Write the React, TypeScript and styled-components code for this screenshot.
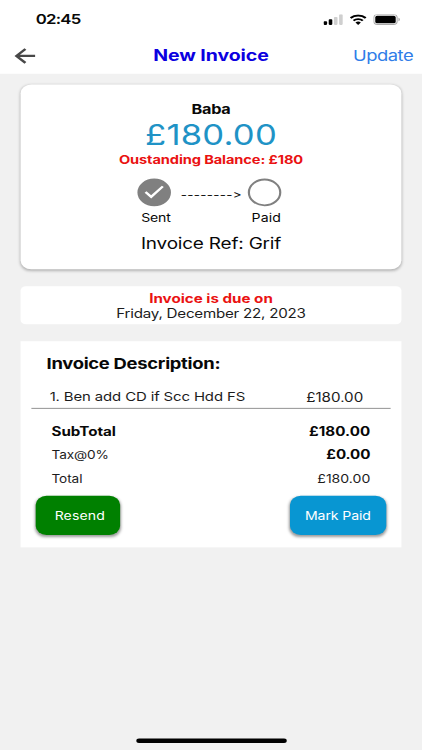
import React from 'react';
import styled, { createGlobalStyle } from 'styled-components';

const Global = createGlobalStyle`
  html, body { margin: 0; background: #f1f1f1; }
  * { box-sizing: border-box; }
`;

const Viewport = styled.div`
  width: 422px;
  height: 750px;
  overflow: hidden;
`;

/* Logical 390x844 phone screen, fitted to the 422x750 viewport. */
const Screen = styled.div`
  width: 390px;
  height: 844px;
  display: flex;
  flex-direction: column;
  align-items: center;
  background: #f1f1f1;
  color: #080808;
  font-family: Inter, 'Liberation Sans', sans-serif;
  transform: scale(1.08205, 0.88863);
  transform-origin: 0 0;
`;

const Text = styled.div<{
  $size: number;
  $line?: number;
  $bold?: boolean;
  $color?: string;
  $spacing?: number;
}>`
  font-size: ${(p) => p.$size}px;
  line-height: ${(p) => p.$line ?? Math.round(p.$size * 1.22)}px;
  font-weight: ${(p) => (p.$bold ? 700 : 400)};
  color: ${(p) => p.$color ?? 'inherit'};
  letter-spacing: ${(p) => p.$spacing ?? 0}px;
  white-space: nowrap;
`;

const TopArea = styled.header`
  width: 100%;
  height: 83px;
  flex: none;
  background: #fff;
`;

const StatusBar = styled.div`
  height: 43.4px;
  padding: 0 20px 0 33px;
  display: flex;
  align-items: center;
  justify-content: space-between;
`;

const Clock = styled(Text)`
  font-weight: 600;
`;

const StatusIcons = styled.div`
  display: flex;
  align-items: center;
  gap: 6px;
`;

const NavBar = styled.nav`
  height: 39px;
  padding: 0 8.2px 0 12.8px;
  display: flex;
  align-items: center;
  justify-content: space-between;
`;

const NavTitle = styled(Text)`
  margin: 0 0 0 31px;
  padding-top: 0.6px;
`;

const NavAction = styled(Text)`
  padding-top: 1.2px;
`;

const SummaryCard = styled.section`
  width: 351.6px;
  height: 208.8px;
  margin-top: 11.7px;
  padding-top: 19.3px;
  flex: none;
  display: flex;
  flex-direction: column;
  align-items: center;
  background: #fff;
  border-radius: 10px;
  box-shadow: 0 1px 3px rgba(0, 0, 0, 0.26);
`;

const Progress = styled.div`
  display: flex;
  align-items: flex-start;
  margin: 12.8px 2.2px 9.7px 0;
`;

const Step = styled.div`
  width: 36px;
  display: flex;
  flex-direction: column;
  align-items: center;
  gap: 5.4px;
`;

const StepLabel = styled(Text)`
  padding-left: 2.4px;
`;

const StepCircle = styled.div<{ $done?: boolean }>`
  width: 31px;
  height: 31px;
  border-radius: 50%;
  border: 2px solid #808080;
  background: ${(p) => (p.$done ? '#808080' : '#fff')};
  display: flex;
  align-items: center;
  justify-content: center;
`;

const Connector = styled(Text)`
  width: 66px;
  padding: 11.2px 0 0 3px;
  display: flex;
  justify-content: center;
`;

const DueCard = styled.section`
  width: 351.6px;
  height: 43.3px;
  margin-top: 18.7px;
  padding-top: 4.7px;
  flex: none;
  display: flex;
  flex-direction: column;
  align-items: center;
  background: #fff;
  border-radius: 5px;
`;

const DetailCard = styled.section`
  width: 351.6px;
  height: 232.3px;
  margin-top: 18.7px;
  flex: none;
  background: #fff;
`;

const DetailTitle = styled(Text)`
  padding: 14.5px 0 0 23.8px;
`;

const ItemRow = styled.div`
  height: 26px;
  margin: 14.3px 9.5px 0 9.5px;
  padding: 4px 25.6px 0 17.2px;
  display: flex;
  justify-content: space-between;
  border-bottom: 1px solid #858585;
`;

const Totals = styled.div`
  padding: 12.7px 28.6px 0 28.4px;
`;

const TotalRow = styled.div`
  height: 26.2px;
  display: flex;
  align-items: center;
  justify-content: space-between;
`;

const Actions = styled.div`
  margin: 7px 14.2px 0 14.2px;
  display: flex;
  justify-content: space-between;
`;

const ActionButton = styled.button<{ $color: string; $width: number; $indent?: number }>`
  width: ${(p) => p.$width}px;
  height: 44px;
  padding: 0 0 0 ${(p) => p.$indent ?? 0}px;
  border: 0;
  border-radius: 10px;
  background: ${(p) => p.$color};
  font-family: inherit;
  display: flex;
  align-items: center;
  justify-content: center;
  box-shadow: 0 2px 3px rgba(0, 0, 0, 0.4);
`;

const HomeIndicator = styled.div`
  width: 139px;
  height: 4.8px;
  flex: none;
  margin: auto 0 7.8px;
  border-radius: 3px;
  background: #000;
`;

const BackArrow = () => (
  <svg width="20" height="18" viewBox="0 0 20 18" fill="none" stroke="#484848" strokeWidth="2.5">
    <path d="M19.5 9H2.2M10.5 1.2L2.200 9l8.300 7.800" />
  </svg>
);

const Signal = () => (
  <svg width="18" height="12" viewBox="0 0 18 12">
    <rect x="0" y="8" width="3.3" height="4" rx="0.9" fill="#000" />
    <rect x="4.8" y="5.7" width="3.3" height="6.3" rx="0.9" fill="#000" />
    <rect x="9.6" y="3" width="3.3" height="9" rx="0.9" fill="#cfcfcf" />
    <rect x="14.4" y="0" width="3.3" height="12" rx="0.9" fill="#cfcfcf" />
  </svg>
);

const Wifi = () => (
  <svg width="16" height="12" viewBox="0 0 16 12" fill="none" stroke="#000" strokeWidth="2.1">
    <path d="M1 4.3a10 10 0 0 1 14 0" />
    <path d="M3.7 7.3a6.1 6.1 0 0 1 8.6 0" />
    <path d="M8 12L5.5 9.4a3.6 3.6 0 0 1 5 0z" fill="#000" stroke="none" />
  </svg>
);

const Battery = () => (
  <svg width="25" height="12" viewBox="0 0 25 12">
    <rect x="0.5" y="0.5" width="21.5" height="11" rx="3.3" fill="#fff" stroke="#aaa" />
    <rect x="1.8" y="1.8" width="18.9" height="8.4" rx="1.8" fill="#000" />
    <path d="M23.2 4v4c1-.4 1.4-1.2 1.4-2s-.4-1.6-1.4-2z" fill="#aaa" />
  </svg>
);

const Check = () => (
  <svg width="19" height="16" viewBox="0 0 19 16" fill="none" stroke="#fff" strokeWidth="2.4">
    <path d="M1.5 8.2l5.2 5.3L17.5 1.7" />
  </svg>
);

const ink = '#1c1c1c';
const red = '#ea1212';

export default function App() {
  return (
    <Viewport>
      <Global />
      <Screen>
        <TopArea>
          <StatusBar>
            <Clock $size={15.5} $spacing={-0.7}>02:45</Clock>
            <StatusIcons>
              <Signal />
              <Wifi />
              <Battery />
            </StatusIcons>
          </StatusBar>
          <NavBar>
            <BackArrow />
            <NavTitle as="h1" $size={18} $bold $color="#0c00e0" $spacing={-0.07}>New Invoice</NavTitle>
            <NavAction $size={17} $color="#2f7de8" $spacing={-0.45}>Update</NavAction>
          </NavBar>
        </TopArea>

        <SummaryCard>
          <Text $size={15} $line={18} $bold $spacing={-0.18}>Baba</Text>
          <Text $size={32} $line={39} $color="#1f93c6" $spacing={0.2}>£180.00</Text>
          <Text $size={13.5} $line={17} $bold $color={red} $spacing={-0.1}>Oustanding Balance: £180</Text>
          <Progress>
            <Step>
              <StepCircle $done><Check /></StepCircle>
              <StepLabel $size={13} $line={16} $spacing={-0.15}>Sent</StepLabel>
            </Step>
            <Connector $size={12.5} $line={15} $spacing={0.25}>{'-------->'}</Connector>
            <Step>
              <StepCircle />
              <StepLabel $size={13} $line={16} $spacing={0.15}>Paid</StepLabel>
            </Step>
          </Progress>
          <Text $size={17.5} $line={22} $spacing={-0.17}>Invoice Ref: Grif</Text>
        </SummaryCard>

        <DueCard>
          <Text $size={14} $line={17} $bold $color={red}>Invoice is due on</Text>
          <Text $size={14} $line={17} $color={ink} $spacing={-0.22}>Friday, December 22, 2023</Text>
        </DueCard>

        <DetailCard>
          <DetailTitle $size={17} $line={21} $bold $spacing={-0.27}>Invoice Description:</DetailTitle>
          <ItemRow>
            <Text $size={13.8} $line={17} $color={ink} $spacing={-0.12}>1. Ben add CD if Scc Hdd FS</Text>
            <Text $size={14} $line={17} $color={ink}>£180.00</Text>
          </ItemRow>
          <Totals>
            <TotalRow>
              <Text $size={14} $bold>SubTotal</Text>
              <Text $size={14} $bold $spacing={0.05}>£180.00</Text>
            </TotalRow>
            <TotalRow>
              <Text $size={12.6} $color={ink} $spacing={-0.1}>Tax@0%</Text>
              <Text $size={14} $bold $spacing={-0.1}>£0.00</Text>
            </TotalRow>
            <TotalRow>
              <Text $size={12.6} $color={ink} $spacing={-0.1}>Total</Text>
              <Text $size={13} $color={ink}>£180.00</Text>
            </TotalRow>
          </Totals>
          <Actions>
            <ActionButton $color="#008000" $width={77.2} $indent={3.5}>
              <Text $size={13} $color="#fff" $spacing={0.1}>Resend</Text>
            </ActionButton>
            <ActionButton $color="#0896d2" $width={88.7}>
              <Text $size={13} $color="#fff" $spacing={-0.1}>Mark Paid</Text>
            </ActionButton>
          </Actions>
        </DetailCard>

        <HomeIndicator />
      </Screen>
    </Viewport>
  );
}
